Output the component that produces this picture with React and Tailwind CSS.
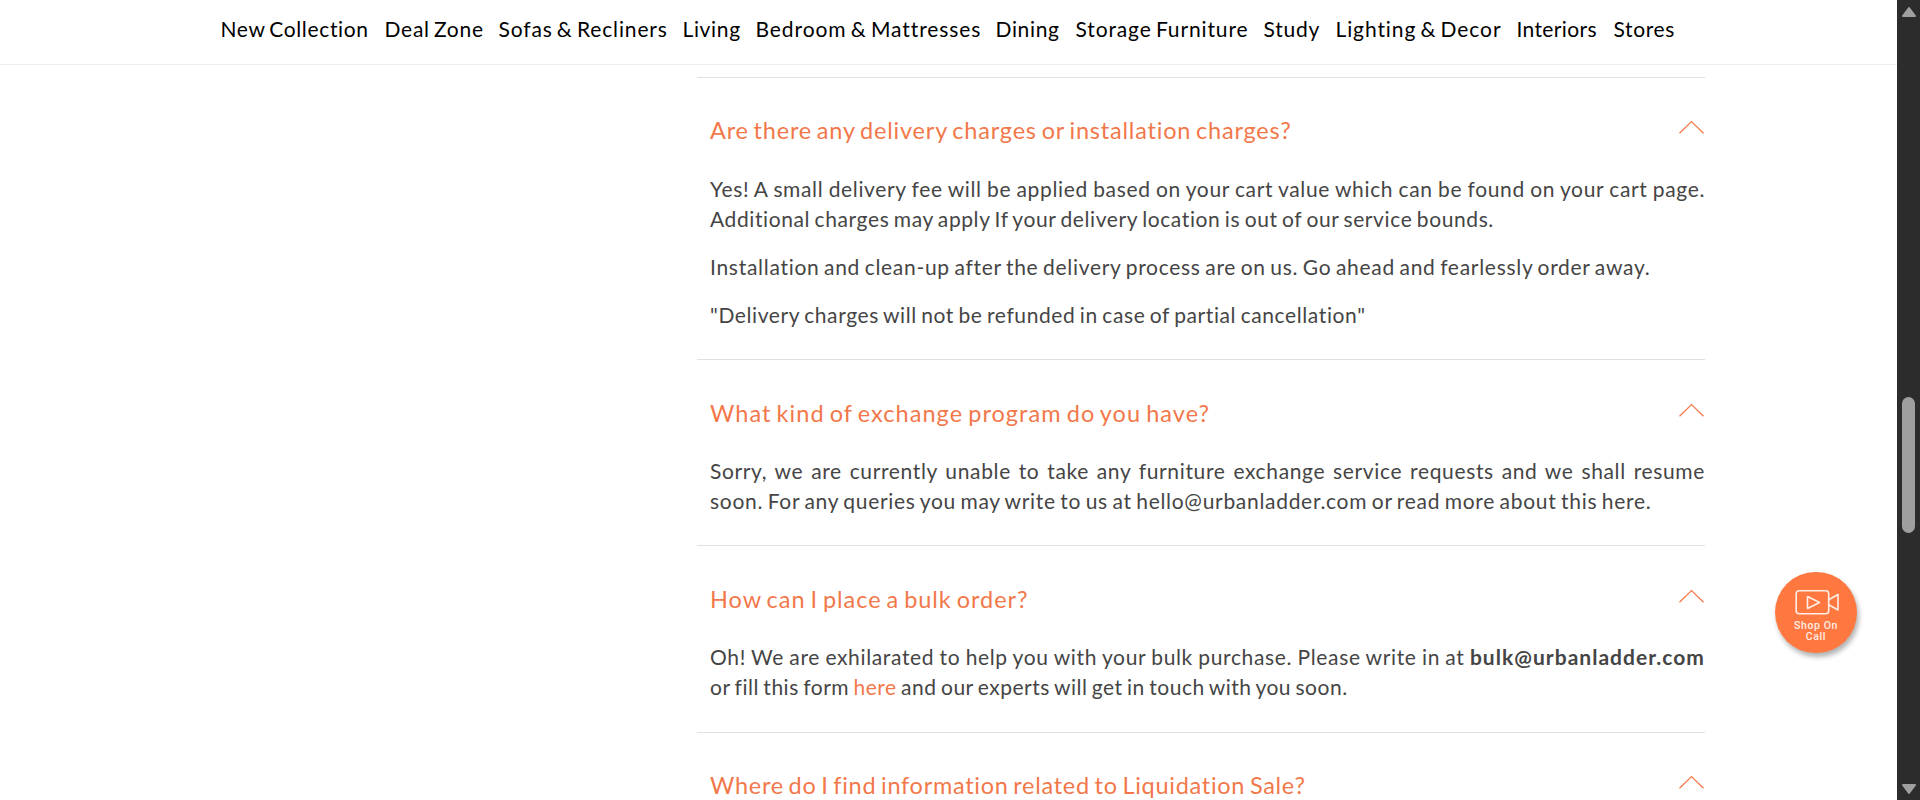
const NAV = [
  { label: "New Collection", cls: "w-[148px] tracking-[0.65px]" },
  { label: "Deal Zone", cls: "w-[98px] tracking-[0.75px]" },
  { label: "Sofas & Recliners", cls: "w-[168px] tracking-[0.86px]" },
  { label: "Living", cls: "w-[57px] tracking-[0.65px]" },
  { label: "Bedroom & Mattresses", cls: "w-[224px] tracking-[0.92px]" },
  { label: "Dining", cls: "w-[64px] tracking-[0.65px]" },
  { label: "Storage Furniture", cls: "w-[172px] tracking-[0.87px]" },
  { label: "Study", cls: "w-[56px] tracking-[0.75px]" },
  { label: "Lighting & Decor", cls: "w-[165px] tracking-[0.9px]" },
  { label: "Interiors", cls: "w-[81px] tracking-[0.36px]" },
  { label: "Stores", cls: "w-[62px] tracking-[0.65px]" },
];

function Chevron() {
  return (
    <svg className="mt-[5px] mr-[1.5px] h-[15px] w-[25px] shrink-0" viewBox="0 0 25 15" fill="none" stroke="#f47a49" strokeWidth="1.3">
      <path d="M0.5 13.3 L12.5 1.6 L24.5 13.3" />
    </svg>
  );
}

function FaqItem({ title, tracking, children }) {
  return (
    <section className="border-t border-[#dfe1e1] pt-[37.5px] pb-[29.5px] pl-[13px]">
      <div className="flex items-start justify-between">
        <h3 className={`h-[30px] text-[23.5px] leading-[30px] [word-spacing:-2px] whitespace-nowrap text-[#f2784a] ${tracking}`}>{title}</h3>
        <Chevron />
      </div>
      <div className="mt-[28.3px] flex flex-col gap-[18px] text-[21px] leading-[30px] [word-spacing:-1.5px] whitespace-nowrap text-[#454545]">
        {children}
      </div>
    </section>
  );
}

function Justified({ className, children }) {
  return <span className={`block w-[995px] [text-align-last:justify] ${className}`}>{children}</span>;
}

export default function App() {
  return (
    <div className="relative flex h-[800px] w-[1920px] overflow-hidden bg-white font-['Lato',sans-serif]">
      <div className="flex h-[800px] w-[1897px] flex-col overflow-hidden">
        <header className="h-[65px] shrink-0 border-b border-[#eeeeee] pt-[14px] pl-[220.5px]">
          <nav className="flex gap-4 text-[21px] leading-[30px] [word-spacing:-2px] whitespace-nowrap text-black">
            {NAV.map((item) => (
              <a key={item.label} className={`shrink-0 ${item.cls}`}>{item.label}</a>
            ))}
          </nav>
        </header>

        <main className="mt-[11.9px] ml-[697px] w-[1008px] shrink-0">
          <FaqItem title="Are there any delivery charges or installation charges?" tracking="tracking-[0.8px]">
            <p>
              <Justified className="tracking-[0.64px]">Yes! A small delivery fee will be applied based on your cart value which can be found on your cart page.</Justified>
              <span className="block tracking-[0.6px]">Additional charges may apply If your delivery location is out of our service bounds.</span>
            </p>
            <p className="tracking-[0.71px]">Installation and clean-up after the delivery process are on us. Go ahead and fearlessly order away.</p>
            <p className="tracking-[0.6px]">"Delivery charges will not be refunded in case of partial cancellation"</p>
          </FaqItem>

          <FaqItem title="What kind of exchange program do you have?" tracking="tracking-[1.05px]">
            <p>
              <Justified className="tracking-[0.65px]">Sorry, we are currently unable to take any furniture exchange service requests and we shall resume</Justified>
              <span className="block tracking-[0.7px]">soon. For any queries you may write to us at hello@urbanladder.com or read more about this here.</span>
            </p>
          </FaqItem>

          <FaqItem title="How can I place a bulk order?" tracking="tracking-[0.96px]">
            <p>
              <Justified className="tracking-[0.65px]">
                Oh! We are exhilarated to help you with your bulk purchase. Please write in at <b className="font-bold tracking-[1.03px]">bulk@urbanladder.com</b>
              </Justified>
              <span className="block tracking-[0.52px]">
                or fill this form <a className="text-[#f2784a]">here</a> and our experts will get in touch with you soon.
              </span>
            </p>
          </FaqItem>

          <FaqItem title="Where do I find information related to Liquidation Sale?" tracking="tracking-[0.72px]" />
        </main>
      </div>

      <aside className="flex h-[800px] w-[23px] shrink-0 flex-col items-center bg-[#2c2c2c]">
        <svg className="mt-[6px] h-3 w-4" viewBox="0 0 16 12" fill="#9f9f9f" stroke="#9f9f9f" strokeWidth="2" strokeLinejoin="round">
          <path d="M8 2 L14 10 H2 Z" />
        </svg>
        <div className="mt-[379px] h-[136px] w-[13px] rounded-full bg-[#9f9f9f]" />
        <svg className="mt-[250px] h-3 w-4" viewBox="0 0 16 12" fill="#9f9f9f" stroke="#9f9f9f" strokeWidth="2" strokeLinejoin="round">
          <path d="M2 2 H14 L8 10 Z" />
        </svg>
      </aside>

      <button className="absolute top-[572px] left-[1774.5px] flex h-[81px] w-[82px] flex-col items-center rounded-full bg-[#ff7840] pt-[17px] text-white shadow-[2px_4px_5px_rgba(0,0,0,0.3)]">
        <svg className="ml-[4px] h-[27px] w-[45px]" viewBox="0 0 45 27" fill="none" stroke="#ffeee6" strokeWidth="1.6" strokeLinejoin="round">
          <rect x="1.2" y="1.7" width="32.5" height="23" rx="3" />
          <path d="M12.5 7.5 V19.5 L24.5 13.5 Z" />
          <path d="M33.7 10.7 L43 5.5 V21 L33.7 15.8" />
        </svg>
        <span className="mt-[4px] ml-[1px] text-center font-['Roboto',sans-serif] text-[10.5px] leading-[11px] font-medium tracking-[0.6px] text-[#ffeee6]">
          Shop On
          <br />
          Call
        </span>
      </button>
    </div>
  );
}
